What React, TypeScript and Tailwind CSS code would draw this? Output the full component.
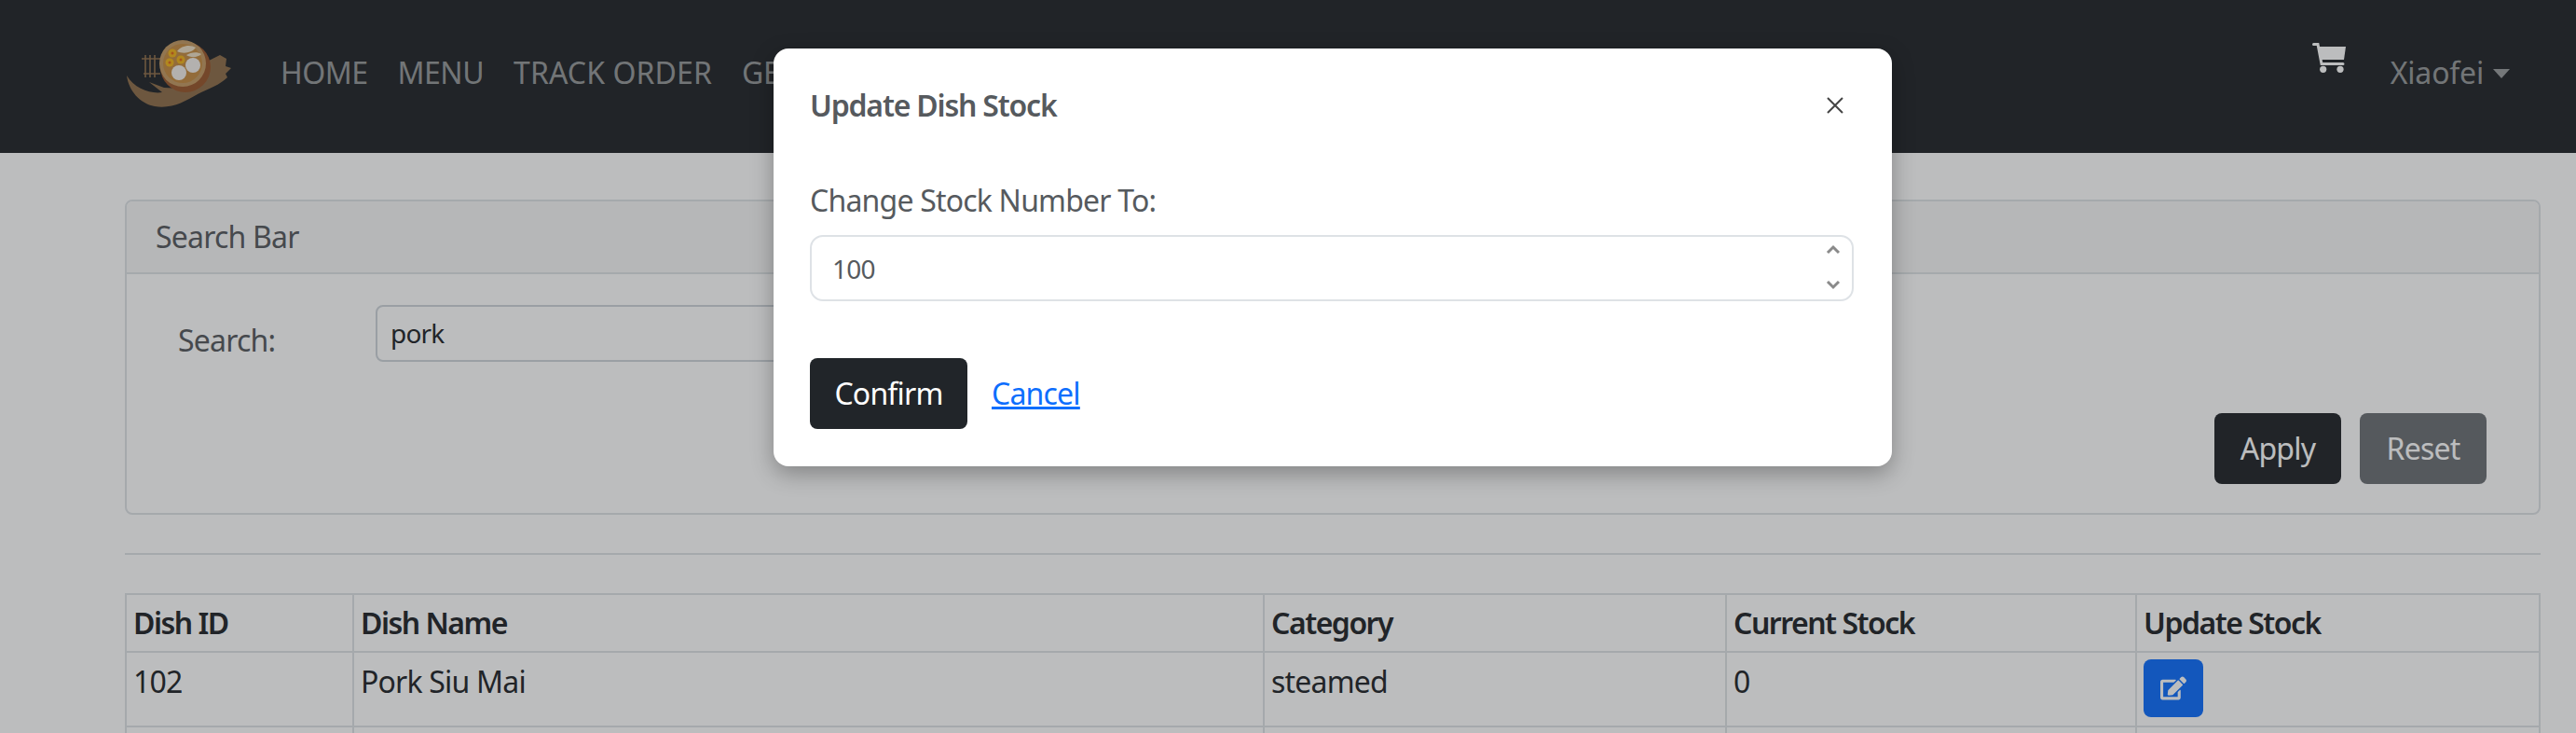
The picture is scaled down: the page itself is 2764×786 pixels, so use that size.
import React from "react";
import { FaEdit } from "react-icons/fa";

const Logo = () => (
  <svg width="112" height="74" viewBox="0 0 112 74">
    <path
      d="M0 40C2 56 14 70 30 73C48 76 62 68 76 60C88 54 100 50 108 42L106 38L112 32L106 30L107 22L100 18L88 24L78 50L60 54L40 53L24 47L38 58C26 60 8 54 0 40Z"
      fill="#8f6e4a"
    />
    <g stroke="#8f6e4a" strokeWidth="1.6">
      <path d="M16 22H36M18 38H36M20 18V42M25 18V42M30 18V42" />
    </g>
    <circle cx="63" cy="31" r="27" fill="#99562c" />
    <circle cx="60" cy="27" r="25" fill="#c39a63" />
    <circle cx="60" cy="27" r="21" fill="#c48c42" />
    <circle cx="49" cy="16" r="4.5" fill="#f0b41c" />
    <circle cx="49" cy="16" r="1.5" fill="#e0671c" />
    <circle cx="46" cy="26" r="4.5" fill="#f0b41c" />
    <circle cx="46" cy="26" r="1.5" fill="#e0671c" />
    <circle cx="58" cy="23" r="4.5" fill="#f0b41c" />
    <circle cx="58" cy="23" r="1.5" fill="#e0671c" />
    <circle cx="56" cy="37" r="8" fill="#f2eeea" />
    <circle cx="71" cy="29" r="8" fill="#f2eeea" />
    <path d="M54 14C58 8 68 6 74 10C70 16 60 17 54 14Z" fill="#ecdfc4" />
    <path d="M64 18C68 15 76 14 80 17C76 21 68 21 64 18Z" fill="#ecdfc4" />
  </svg>
);

const Cart = () => (
  <svg width="36" height="32" viewBox="0 0 36 32" fill="white">
    <path d="M1.5 1.5H6L10 22.5H33" fill="none" stroke="white" strokeWidth="3" strokeLinecap="round" />
    <path d="M7 4H36L34 18H9.5Z" />
    <circle cx="11.7" cy="28.3" r="3.6" />
    <circle cx="30" cy="28.3" r="3.6" />
  </svg>
);

const cell = "border-2 border-[#dee2e6] px-[7px]";
const head = "border-2 border-[#dee2e6] px-[7px] text-left font-semibold tracking-[-1.5px]";
const body = "border-2 border-[#dee2e6] px-[7px] pt-[7px]";

export default function App() {
  return (
    <div className="relative h-[786px] overflow-hidden bg-white text-[32px] text-[#212529] font-['Noto_Sans',sans-serif] tracking-[-0.8px]">
      <nav className="flex h-[164px] items-center bg-[#212529] pb-[8px] pl-[136px] pr-[71px] tracking-[-0.2px]">
        <Logo />
        <ul className="ml-[53px] flex gap-[32px] text-[rgba(255,255,255,0.55)]">
          <li className="tracking-[-0.5px]">HOME</li>
          <li className="tracking-[-0.5px]">MENU</li>
          <li className="tracking-[0.1px]">TRACK ORDER</li>
          <li>GET HELP</li>
        </ul>
        <div className="ml-auto flex items-center text-[rgba(255,255,255,0.55)]">
          <div className="mb-[32px] mr-[48px]">
            <Cart />
          </div>
          <span>Xiaofei</span>
          <span className="ml-[10px] mt-[2px] border-x-[9px] border-t-[10px] border-x-transparent border-t-[rgba(255,255,255,0.55)]" />
        </div>
      </nav>

      <main className="pl-[134px] pr-[38px] pt-[50px]">
        <section className="h-[338px] rounded-[8px] border-2 border-[#dee2e6] text-[#565a5e]">
          <div className="flex h-[78px] items-center rounded-t-[6px] border-b-2 border-[#dee2e6] bg-[#f7f7f7] px-[31px]">
            Search Bar
          </div>
          <div className="flex items-start px-[55px] pt-[33px]">
            <label className="mt-[14px] w-[212px]">Search:</label>
            <input
              readOnly
              value="pork"
              className="mb-[-1px] h-[61px] w-[1400px] rounded-[8px] border-2 border-[#ced4da] px-[14px] pb-[2px] text-[28px] text-[#212529] outline-none"
            />
          </div>
          <div className="flex justify-end gap-[20px] pr-[56px] pt-[54px]">
            <button className="h-[76px] w-[136px] rounded-[8px] bg-[#212529] text-white">Apply</button>
            <button className="h-[76px] w-[136px] rounded-[8px] bg-[#6c7075] text-white">Reset</button>
          </div>
        </section>

        <hr className="mt-[41px] border-t-2 border-[#dee2e6]" />

        <table className="mt-[41px] w-full table-fixed border-collapse">
          <thead>
            <tr className="h-[62px]">
              <th className={`w-[244px] ${head}`}>Dish ID</th>
              <th className={`w-[977px] ${head}`}>Dish Name</th>
              <th className={`w-[496px] ${head}`}>Category</th>
              <th className={`w-[440px] ${head}`}>Current Stock</th>
              <th className={head}>Update Stock</th>
            </tr>
          </thead>
          <tbody>
            <tr className="h-[80px] align-top">
              <td className={body}>102</td>
              <td className={body}>Pork Siu Mai</td>
              <td className={body}>steamed</td>
              <td className={body}>0</td>
              <td className={body}>
                <button className="flex h-[62px] w-[64px] items-center justify-center rounded-[8px] bg-[#0d6efd] text-white">
                  <FaEdit size={28} />
                </button>
              </td>
            </tr>
            <tr className="h-[80px]">
              <td className={cell} />
              <td className={cell} />
              <td className={cell} />
              <td className={cell} />
              <td className={cell} />
            </tr>
          </tbody>
        </table>
      </main>

      {/* backdrop and dialog */}
      <div className="absolute inset-0 bg-[#212529]/30" />
      <div className="absolute left-[830px] top-[52px] h-[448px] w-[1200px] rounded-[16px] bg-white pl-[39px] pr-[41px] text-[#565a5e] shadow-[0_8px_24px_rgba(0,0,0,0.3)]">
        <div className="flex h-[121px] items-center justify-between">
          <h5 className="font-semibold tracking-[-1.2px]">Update Dish Stock</h5>
          <svg width="20" height="20" viewBox="0 0 20 20" className="mr-[10px]">
            <path d="M2 2l16 16M18 2L2 18" stroke="#444" strokeWidth="2" />
          </svg>
        </div>
        <label className="mt-[19px] block leading-[46px]">Change Stock Number To:</label>
        <div className="relative mt-[14px]">
          <input
            readOnly
            value="100"
            className="h-[71px] w-full rounded-[14px] border-2 border-[#dee2e6] px-[22px] text-[28px] outline-none"
          />
          <svg width="16" height="50" viewBox="0 0 16 50" className="absolute right-[14px] top-[10px]">
            <path d="M2 9l6-6 6 6M2 40l6 6 6-6" fill="none" stroke="#8a8a8a" strokeWidth="3" />
          </svg>
        </div>
        <div className="mt-[61px] flex items-center gap-[26px]">
          <button className="h-[76px] w-[169px] rounded-[8px] bg-[#212529] text-white">Confirm</button>
          <a className="text-[#0d6efd] underline">Cancel</a>
        </div>
      </div>
    </div>
  );
}
